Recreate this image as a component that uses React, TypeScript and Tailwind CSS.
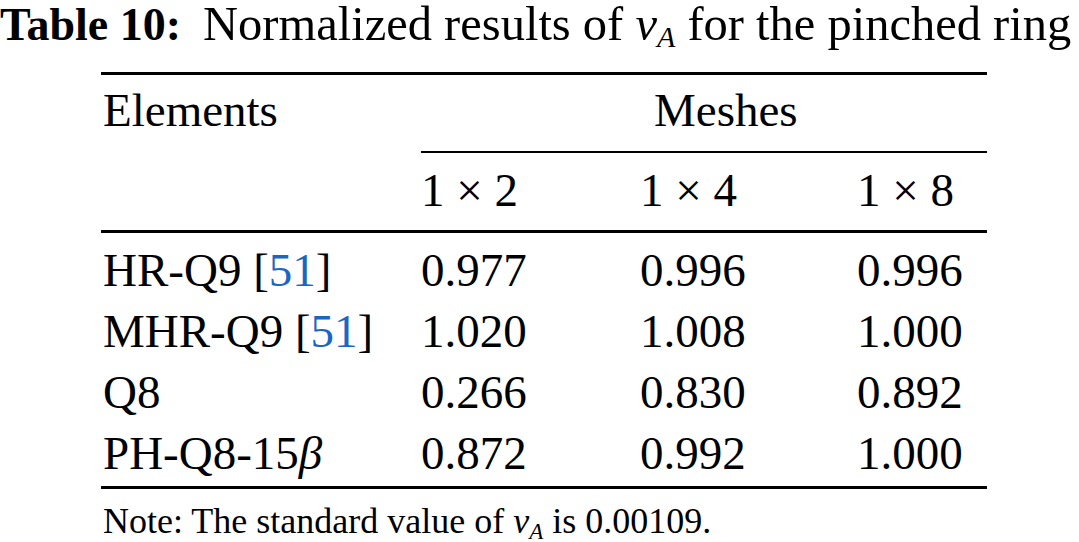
import React from "react";

const rows: { name: React.ReactNode; vals: string[] }[] = [
  {
    name: (
      <>
        HR-Q9 [<span className="text-[#1a66c2]">51</span>]
      </>
    ),
    vals: ["0.977", "0.996", "0.996"],
  },
  {
    name: (
      <>
        MHR-Q9 [<span className="text-[#1a66c2]">51</span>]
      </>
    ),
    vals: ["1.020", "1.008", "1.000"],
  },
  { name: <>Q8</>, vals: ["0.266", "0.830", "0.892"] },
  {
    name: (
      <>
        PH-Q8-15<span className="italic">β</span>
      </>
    ),
    vals: ["0.872", "0.992", "1.000"],
  },
];

export default function App() {
  return (
    <div className="w-[1079px] h-[542px] bg-white text-black font-['Liberation_Serif','Times_New_Roman',serif] overflow-hidden">
      <div className="h-[48px] text-[47px] leading-[48px] whitespace-nowrap">
        <span className="font-bold text-[46px]">Table 10:</span>
        <span className="ml-[22px] text-[48.5px]">
          Normalized results of <span className="italic">v</span>
          <span className="italic text-[30px] leading-[0px] align-[-7px]">A</span> for the pinched ring
        </span>
      </div>

      <div className="ml-[101px] w-[886px] mt-[24px] text-[47px] leading-[61px]">
        <div className="h-[3px] bg-black" />
        <div className="grid grid-cols-[320px_566px] pt-[5px] pb-[10px]">
          <div className="pl-[2px]">Elements</div>
          <div className="pl-[233px]">Meshes</div>
        </div>
        <div className="ml-[320px] h-[2px] bg-black" />
        <div className="grid grid-cols-[320px_219px_217px_130px] pt-[7px] pb-[9px] whitespace-nowrap">
          <div />
          <div>1 × 2</div>
          <div>1 × 4</div>
          <div>1 × 8</div>
        </div>
        <div className="h-[3px] bg-black" />
        <div className="pt-[7px] pb-[2px]">
          {rows.map((r, i) => (
            <div key={i} className="grid grid-cols-[320px_219px_217px_130px] whitespace-nowrap">
              <div className="pl-[2px]">{r.name}</div>
              {r.vals.map((v, j) => (
                <div key={j}>{v}</div>
              ))}
            </div>
          ))}
        </div>
        <div className="h-[3px] bg-black" />
      </div>

      <div className="pl-[103px] mt-[12px] text-[36px] leading-[40px] whitespace-nowrap">
        Note: The standard value of <span className="italic">v</span>
        <span className="italic text-[23px] leading-[0px] align-[-6px]">A</span> is 0.00109.
      </div>
    </div>
  );
}
